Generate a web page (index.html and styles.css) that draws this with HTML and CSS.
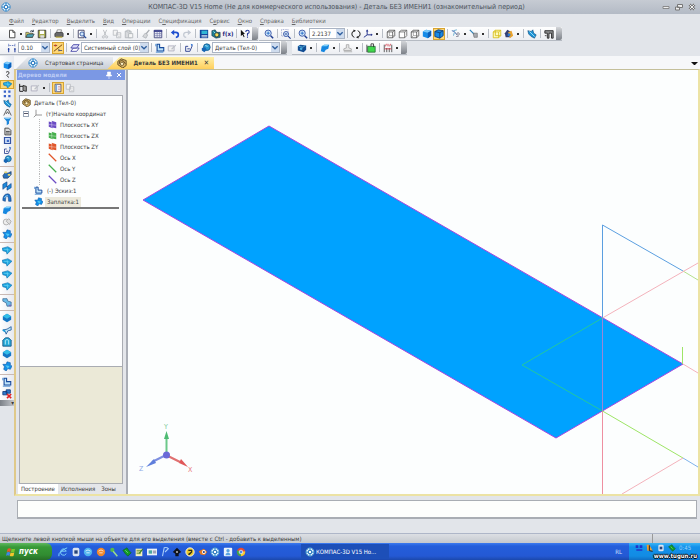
FILE: index.html
```html
<!DOCTYPE html>
<html lang="ru">
<head>
    <meta charset="UTF-8">
    <meta name="viewport" content="width=device-width, initial-scale=1.0">
    <title>КОМПАС-3D V15 Home</title>
    <link rel="stylesheet" href="styles.css">
</head>
<body>

    <svg class="sprite" aria-hidden="true">
        <symbol id="logo" viewBox="0 0 12 12"><circle cx="6" cy="6" r="5" fill="#e4f2fb" stroke="#2b7fc4"/><path d="M6 1v10M1 6h10" stroke="#3c92d4" stroke-width="1.5"/><circle cx="6" cy="6" r="2" fill="#fff" stroke="#1d6cb4"/><path d="M3 3l1.500 1.500M9 3L7.500 4.500M3 9l1.500-1.500M9 9L7.500 7.500" stroke="#2b7fc4"/></symbol>
        <symbol id="new" viewBox="0 0 12 12"><path d="M3 1.500h4l2.500 2.500v6.500H3z" fill="#fff" stroke="#333"/><path d="M7 1.500V4h2.500" fill="none" stroke="#333"/></symbol>
        <symbol id="open" viewBox="0 0 12 12"><path d="M1 10V4h3l1 1h4v5z" fill="#e5e06a" stroke="#444" stroke-width=".8"/><path d="M1 10l2-4h8l-2 4z" fill="#4da3b5" stroke="#333" stroke-width=".8"/><path d="M6 3q2-2 4 0M10 1v2H8" fill="none" stroke="#234"/></symbol>
        <symbol id="save" viewBox="0 0 12 12"><path d="M1.500 1.500h9v9h-9z" fill="#a9ae4c" stroke="#333"/><path d="M3.500 2h5v4h-5z" fill="#fff"/><path d="M4 7.500h4.500v3H4z" fill="#ddd"/></symbol>
        <symbol id="print" viewBox="0 0 12 12"><path d="M4 1h5L8 5H3z" fill="#fff" stroke="#555" stroke-width=".7"/><path d="M1 5.500L3 4h7l1 1.500V9H1z" fill="#68696a" stroke="#222" stroke-width=".7"/><path d="M2 9h8v1.500H2z" fill="#bba83a"/></symbol>
        <symbol id="preview" viewBox="0 0 12 12"><path d="M1.500 1.500h7v9h-7z" fill="#fff" stroke="#335"/><circle cx="6" cy="6" r="2.500" fill="#cfe6fa" stroke="#234a9a"/><path d="M8 8l3 3" stroke="#234a9a" stroke-width="1.500"/></symbol>
        <symbol id="cut" viewBox="0 0 12 12"><path d="M4 1l3 7M8 1L5 8" stroke="#b4b8bd" stroke-width="1"/><circle cx="4" cy="9.500" r="1.300" fill="none" stroke="#b4b8bd"/><circle cx="8" cy="9.500" r="1.300" fill="none" stroke="#b4b8bd"/></symbol>
        <symbol id="copy" viewBox="0 0 12 12"><path d="M1.500 1.500h5v6h-5zM5.500 4.500h5v6h-5z" fill="#f4f4f4" stroke="#b9bdc2"/><path d="M7 7h2.500M7 9h2.500" stroke="#c4c8cc" stroke-width=".7"/></symbol>
        <symbol id="paste" viewBox="0 0 12 12"><path d="M1.500 2.500h7v8h-7z" fill="#d8dadd" stroke="#b0b4b9"/><path d="M3.500 1.500h3v2h-3zM5.500 5.500h5v5h-5z" fill="#f6f6f6" stroke="#b0b4b9"/></symbol>
        <symbol id="brush" viewBox="0 0 12 12"><path d="M10 1L6 6" stroke="#a9adb2" stroke-width="1.500"/><path d="M5 5l3 2-2 4-4-2z" fill="#d5d7da" stroke="#b0b4b9"/></symbol>
        <symbol id="props" viewBox="0 0 12 12"><path d="M1.500 1.500h9v9h-9z" fill="#e8eaf6" stroke="#3a3f78"/><path d="M1 2.500h10" stroke="#373c8c" stroke-width="2"/><path d="M2 5.500h8M2 8h8M5 3v7M8 3v7" stroke="#6a6fa4" stroke-width=".7"/></symbol>
        <symbol id="undo" viewBox="0 0 12 12"><path d="M4 4h3q3 0 3 3t-3 3" fill="none" stroke="#1f4fd0" stroke-width="2"/><path d="M1 4.200L5 1v6.500z" fill="#1f4fd0"/></symbol>
        <symbol id="redo" viewBox="0 0 12 12"><path d="M8 4H5Q2 4 2 7t3 3" fill="none" stroke="#c3c9d3" stroke-width="1.500"/><path d="M11 4.200L7 1v6.500z" fill="#c3c9d3"/></symbol>
        <symbol id="book" viewBox="0 0 12 12"><path d="M1 1h10v10H1z" fill="#14439a"/><path d="M3 2h7v4H3z" fill="#31b6d4"/><path d="M3 8h7M3 9.500h7" stroke="#e8f2fa"/></symbol>
        <symbol id="gears" viewBox="0 0 12 12"><path d="M1 2l4-1 2 3h4v6l-5 1-5-3z" fill="#1e8295" stroke="#123" stroke-width=".6"/><circle cx="7" cy="7" r="2.500" fill="#f3e05a" stroke="#333"/><path d="M3 3l2 2" stroke="#aef"/></symbol>
        <symbol id="arrowhelp" viewBox="0 0 12 12"><path d="M1 1l5 5H4l1.500 3.500-1 .5L3 7 1 8.500z" fill="#111"/><path d="M7 3.500Q7 1.500 9 1.500t2 2q0 1.500-2 2V8M9 9v1.500" fill="none" stroke="#24389a" stroke-width="1.300"/></symbol>
        <symbol id="zoom" viewBox="0 0 12 12"><circle cx="5" cy="5" r="3.700" fill="#d5eafa" stroke="#2647a0"/><path d="M8 8l3 3" stroke="#1f3d90" stroke-width="1.800"/><path d="M3 5h4M5 3v4" stroke="#1b63c4"/></symbol>
        <symbol id="zoomarea" viewBox="0 0 12 12"><path d="M.5.5h8v8h-8z" fill="none" stroke="#8893c4" stroke-dasharray="1 1"/><circle cx="6" cy="6" r="3" fill="#d5eafa" stroke="#2647a0"/><path d="M4.500 6h3M8.500 8.500l3 3" stroke="#1f3d90" stroke-width="1.400"/></symbol>
        <symbol id="rotate" viewBox="0 0 12 12"><path d="M4 2Q1 3 1 6t3 4M8 2q3 1 3 4t-3 4" fill="none" stroke="#222" stroke-width="1.200"/><path d="M3 .5l3 1.500-3 2zM9 8l-3 2 3 1.500z" fill="#222"/></symbol>
        <symbol id="axes" viewBox="0 0 12 12"><path d="M5 1v6l-4 3M5 7h6" fill="none" stroke="#2c3a90" stroke-width="1.200"/><path d="M3.500 3L5 .5 6.500 3M9.500 5.500l2 1.500-2 1.500" fill="#2c3a90"/></symbol>
        <symbol id="cubewire" viewBox="0 0 12 12"><path d="M1.500 3.500L4 1.500h6.500V8L8 10.500H1.500zM1.500 3.500H8v7M8 3.500l2.500-2" fill="#fff" stroke="#444" stroke-width=".9"/><path d="M4 1.500V8h6.500M4 8l-2.500 2.500" fill="none" stroke="#777" stroke-width=".7"/></symbol>
        <symbol id="cubeline" viewBox="0 0 12 12"><path d="M1.500 3.500L4 1.500h6.500V8L8 10.500H1.500zM1.500 3.500H8v7M8 3.500l2.500-2" fill="#fff" stroke="#555" stroke-width=".9"/></symbol>
        <symbol id="cubeblue" viewBox="0 0 12 12"><path d="M1 3l4-2 6 1v6l-4 3-6-2z" fill="#168be8"/><path d="M1 3l4-2 6 1-4 2.500z" fill="#7fc9f8"/><path d="M7 4.500L11 2v6l-4 3z" fill="#0d5eb8"/></symbol>
        <symbol id="cubeedge" viewBox="0 0 12 12"><path d="M1 3l4-2 6 1v6l-4 3-6-2z" fill="#168be8" stroke="#123a70"/><path d="M1 3l6 1.500L11 2M7 4.500V11" fill="none" stroke="#123a70"/></symbol>
        <symbol id="points" viewBox="0 0 12 12"><path d="M1 2l3 1 3 4" fill="none" stroke="#2b58a8"/><path d="M3 2l4-1M4 4l-1 4" stroke="#51a0c8"/><circle cx="8.500" cy="6" r="1.500" fill="#fff" stroke="#778"/><path d="M6 9h3" stroke="#889"/></symbol>
        <symbol id="hammer" viewBox="0 0 12 12"><path d="M1 1l6 6" stroke="#2d83b8" stroke-width="1.500"/><path d="M5 5h5v5H6z" fill="#a7abb1" stroke="#555" stroke-width=".6"/></symbol>
        <symbol id="yellowbox" viewBox="0 0 12 12"><path d="M1.500 3.500L4 1.500h6.500V8L8 10.500H1.500zM1.500 3.500H8v7M8 3.500l2.500-2M4 1.500V8h6.500" fill="#fffbc0" stroke="#d5bd16"/></symbol>
        <symbol id="section" viewBox="0 0 12 12"><path d="M1 5l3-4 4 2v7H2z" fill="#333f74"/><path d="M5 4l4-2 2 6-4 3z" fill="#e9a32e"/><circle cx="6" cy="7" r="1.800" fill="#2d79d0"/></symbol>
        <symbol id="refresh" viewBox="0 0 12 12"><path d="M1 2l4 1 2-2 1 4 3 2-2 4-4-2-3-3z" fill="#1b93d6" stroke="#124a7a" stroke-width=".7"/><path d="M3 3l6 6" stroke="#b3e8fa"/></symbol>
        <symbol id="calc" viewBox="0 0 12 12"><path d="M1 2h10v9H9V5H6v6H4V5H1z" fill="#8c8d8e" stroke="#222"/><path d="M1 8h2" stroke="#333"/></symbol>
        <symbol id="step" viewBox="0 0 12 12"><path d="M2 1v4M9.500 1v4M2 3h8" stroke="#2c4ca8" stroke-dasharray="1 1"/><path d="M2 6v5M9.500 6v5M1 7.500h2M8.500 7.500h2" stroke="#2540a0" stroke-width="1.300"/></symbol>
        <symbol id="snap" viewBox="0 0 12 12"><path d="M1 10L11 2" stroke="#7a4a14" stroke-width="1.200"/><path d="M1 3h4M7 9h4M7 7v3" fill="none" stroke="#3d4c76"/><circle cx="3" cy="3" r="1.300" fill="#d03a1c"/></symbol>
        <symbol id="layers" viewBox="0 0 12 12"><path d="M1 10l3-4h7l-3 4z" fill="#fff" stroke="#3b3ba2"/><path d="M1 6l3-4h7L8 6z" fill="#dcdcf8" stroke="#3b3ba2"/></symbol>
        <symbol id="sketch" viewBox="0 0 12 12"><path d="M2.500 1.500h3v4h5v4h-8z" fill="#bfe3fa" stroke="#174a9c" stroke-width="1.300"/><path d="M1 1v3M1 11h9" stroke="#2f7cc9"/></symbol>
        <symbol id="edit" viewBox="0 0 12 12"><path d="M1.500 3.500h7v6h-7z" fill="#f1f1f1" stroke="#aab"/><path d="M5 7l5-5 1 1-5 5z" fill="#bcc0c6"/></symbol>
        <symbol id="measure" viewBox="0 0 12 12"><path d="M2 10V4h3M2 10h5l3-7M4 7h3" fill="none" stroke="#2b408f" stroke-width="1.100"/><path d="M8 1l3 1-2 2z" fill="#2b6fd0"/></symbol>
        <symbol id="part" viewBox="0 0 12 12"><circle cx="7" cy="5" r="4" fill="#2b9bd2" stroke="#14588c"/><path d="M1 6l4-1 2 3-3 3-3-2z" fill="#1765b4"/><path d="M5 3l3 1" stroke="#bdeafc"/></symbol>
        <symbol id="body" viewBox="0 0 12 12"><path d="M1 4l3-2 7 1v5l-3 3-7-2z" fill="#124d93"/><path d="M2 4l5 1 3-2" fill="none" stroke="#5ab6df"/><circle cx="5" cy="7" r="1.500" fill="#4bb0e0"/></symbol>
        <symbol id="surface" viewBox="0 0 12 12"><path d="M1 10l1-6 3-2h6l-1 5-3 1-2 3z" fill="#1687e0"/><path d="M2 4l3-2h6L8 4z" fill="#7cd0fa"/></symbol>
        <symbol id="stamp" viewBox="0 0 12 12"><path d="M4 6V2h3v4l3 1v2H1V7z" fill="#e5e5e5" stroke="#a8a8a8"/><path d="M1 10.500h10" stroke="#a8a8a8"/></symbol>
        <symbol id="green" viewBox="0 0 12 12"><path d="M2 4h9v7H2z" fill="#3fd84b" stroke="#2a6e3a"/><path d="M6 4V1h3v4" fill="none" stroke="#333"/><path d="M1 2v9" stroke="#444"/></symbol>
        <symbol id="dims" viewBox="0 0 12 12"><path d="M1.500 2v9M10.500 2v9M4.500 6v5M7.500 6v5" stroke="#444"/><path d="M2 7h8M4 1l-1 3M6 1v3M9 1L8 4" stroke="#cf2c3c"/></symbol>
        <symbol id="tree" viewBox="0 0 12 12"><path d="M2 1v9h4M2 4h4" fill="none" stroke="#222" stroke-width="1.200"/><path d="M6 3l4 1v6L6 9z" fill="#999" stroke="#222"/></symbol>
        <symbol id="pane" viewBox="0 0 12 12"><path d="M2.500 1.500h7v9h-7z" fill="#fff" stroke="#446"/><path d="M3 2h2v8H3z" fill="#7aa4d8"/><path d="M6 4h3M6 6h3M6 8h3" stroke="#c99"/></symbol>
        <symbol id="detail" viewBox="0 0 12 12"><path d="M1 4l4-3 6 2v6l-4 3-6-4z" fill="#d5b165" stroke="#54401a"/><path d="M3 7V4q3-2 5 0l2 3" fill="none" stroke="#54401a"/><circle cx="6" cy="7" r="2" fill="#fff2c4" stroke="#54401a" stroke-width=".8"/></symbol>
        <symbol id="origin" viewBox="0 0 12 12"><path d="M4 1v7h8M4 8l-3 3" fill="none" stroke="#777"/></symbol>
        <symbol id="plane" viewBox="0 0 12 12"><path d="M1 2l4 1V1l6 2v8L6 10v1L1 9z" fill="currentColor"/><path d="M5 1v9M1 6l10 1" stroke="#fff" stroke-opacity=".5"/></symbol>
        <symbol id="axis" viewBox="0 0 12 12"><path d="M1 1l10 10" stroke="currentColor" stroke-width="1.600"/></symbol>
        <symbol id="patch" viewBox="0 0 12 12"><path d="M1 4l4 0 1-3 4 1 0 3 2 1-2 4-3-1-2 3-3-2 1-3z" fill="#148fe6" stroke="#0c5aa8" stroke-width=".7"/><path d="M4 5l5 1-2 3z" fill="#4fc9f5"/></symbol>
        <symbol id="curve" viewBox="0 0 12 12"><path d="M4 3q3-2 4 0t-2 3 2 4" fill="none" stroke="#333" stroke-width="1.200"/></symbol>
        <symbol id="grid4" viewBox="0 0 12 12"><path d="M1 2h3v3H1zM7 2h3v3H7zM1 8h3v3H1zM7 8h3v3H7z" fill="#3a63c8"/></symbol>
        <symbol id="angle" viewBox="0 0 12 12"><path d="M1 10l4-8h2l4 8M4 8l2-3 2 3" fill="none" stroke="#333"/></symbol>
        <symbol id="funnel" viewBox="0 0 12 12"><path d="M1 1h10L8 6v3l-3 2V6z" fill="#1e86da"/><path d="M3 2h6" stroke="#a9e1fa"/></symbol>
        <symbol id="sheet" viewBox="0 0 12 12"><path d="M2.500 1.500h5l3 3v6h-8z" fill="#d8d8d8" stroke="#222"/><path d="M4 6h5M4 8h5" stroke="#333"/></symbol>
        <symbol id="frame" viewBox="0 0 12 12"><path d="M2 2h8v8H2z" fill="#cfe0fa" stroke="#3354a4" stroke-width="1.600"/><path d="M5 5h3v3H5z" fill="#3f6bc4"/></symbol>
        <symbol id="sweep" viewBox="0 0 12 12"><path d="M1 9q0-8 6-8 4 0 4 9H8q0-6-2-6T4 10z" fill="#1f74c9" stroke="#124082" stroke-width=".7"/><path d="M3 6q1-3 4-3" stroke="#9adcf8" fill="none"/></symbol>
        <symbol id="ribbon" viewBox="0 0 12 12"><path d="M1 4l5-3v6l5-4v5l-5 3V6L1 10z" fill="#1c8adb" stroke="#123f85" stroke-width=".7"/></symbol>
        <symbol id="people" viewBox="0 0 12 12"><path d="M1 8l3-4 3 1 4-2v4l-4 4H2z" fill="#2770bc" stroke="#1c2d48" stroke-width=".7"/><path d="M3 3h3v2H3zM7 6h3v2H7z" fill="#e3d36a"/></symbol>
        <symbol id="leaf" viewBox="0 0 12 12"><path d="M0 4l7-2 5 3-6 6-1-3-4-1z" fill="#18a0dc" stroke="#1068a8" stroke-width=".6"/><path d="M2 5l7 1M6 3l1 6" stroke="#7bdcf8" stroke-width=".7"/></symbol>
        <symbol id="ghost" viewBox="0 0 12 12"><circle cx="5" cy="6" r="3.500" fill="#eee" stroke="#aaa"/><path d="M5 5l3-3 3 3-2 4z" fill="#ddd" stroke="#aaa"/></symbol>
        <symbol id="hinge" viewBox="0 0 12 12"><path d="M1 2h5l1 3 4 1v5H6L5 7 1 5z" fill="#69bce8" stroke="#345d8c" stroke-width=".8"/><path d="M8 10h3" stroke="#8a4cb0"/></symbol>
        <symbol id="trim" viewBox="0 0 12 12"><path d="M1 6l5-1 5-3v4l-4 1-2 4-1-3z" fill="#bfe6f6" stroke="#1f5a9c"/><path d="M1 6l3 2" stroke="#1c9bd8" stroke-width="2"/></symbol>
        <symbol id="disc" viewBox="0 0 12 12"><path d="M1 4l5-3 5 3v4l-5 3-5-3z" fill="#1677c4"/><path d="M1 4l5-3 5 3-5 3z" fill="#33bde8"/></symbol>
        <symbol id="arch" viewBox="0 0 12 12"><path d="M1 11V4l3-3h4l3 3v7z" fill="#25a9d8" stroke="#14527f"/><path d="M4 9V4l2-1 2 1v5" fill="none" stroke="#cdf3fb"/></symbol>
        <symbol id="deny" viewBox="0 0 12 12"><path d="M1 3h5v4H1zM5 1h5v4H5z" fill="#2d7bd0" stroke="#113a7a"/><path d="M6 6l5 5M11 6l-5 5" stroke="#e12424" stroke-width="2"/></symbol>
        <symbol id="win" viewBox="0 0 12 12"><path d="M2 2q2-1 4 0L5 6Q3 5 1 6z" fill="#e8562a"/><path d="M6.500 2q2 1 4.500 0l-1 4q-2 1-4 0z" fill="#7bc62c"/><path d="M1 6.500q2-1 4 0l-1 4q-2-1-4 0z" fill="#3f86e8"/><path d="M5.500 6.700q2 1 4.500 0l-1 4q-2 1-4.500 0z" fill="#f4c52c"/></symbol>
        <symbol id="ie" viewBox="0 0 12 12"><path d="M10 8q-2 3-5 1.500T4 4t6 1H3M1 11q-1-3 3-6t7-4" fill="none" stroke="#7ed0f8" stroke-width="1.200"/></symbol>
        <symbol id="app" viewBox="0 0 12 12"><rect x="2" y="1" width="8" height="10" rx="2" fill="#d9e3f1"/><path d="M4 4h4v4H4z" fill="#27447a"/></symbol>
        <symbol id="ball" viewBox="0 0 12 12"><circle cx="6" cy="6" r="5" fill="currentColor"/><path d="M3 5q3-3 6 0M4 7h4" fill="none" stroke="#fff" stroke-opacity=".75" stroke-width="1.200"/></symbol>
        <symbol id="skull" viewBox="0 0 12 12"><circle cx="6" cy="6" r="5" fill="#e8c72a" stroke="#fff"/><path d="M4 4h4v2L5 9M4 9l4-3" fill="none" stroke="#2a2a1a" stroke-width="1.300"/></symbol>
        <symbol id="blender" viewBox="0 0 12 12"><path d="M1 5l6-3 4 4-3 4-5-1z" fill="#e57a22"/><circle cx="7" cy="6" r="2.300" fill="#fff"/><circle cx="7" cy="6" r="1.300" fill="#23408c"/></symbol>
        <symbol id="people2" viewBox="0 0 12 12"><rect x="1" y="1" width="10" height="10" rx="1" fill="#eaf3fc"/><circle cx="6" cy="4.500" r="2" fill="#58a2e2"/><path d="M3 10q0-3 3-3t3 3z" fill="#58a2e2"/></symbol>
        <symbol id="key" viewBox="0 0 12 12"><circle cx="4" cy="3.500" r="2.500" fill="#55b84c"/><path d="M5 5l5 6" stroke="#9bdc8a" stroke-width="1.800"/></symbol>
        <symbol id="cards" viewBox="0 0 12 12"><path d="M1 4l5-3 2 3 3 3-4 4-3-3z" fill="#149a28" stroke="#0a5a1a" stroke-width=".7"/><path d="M4 4l3 3" stroke="#76e07a"/></symbol>
        <symbol id="note" viewBox="0 0 12 12"><path d="M2 2h8v9H2z" fill="#f4f2bd"/><path d="M3 4h6M3 6h4M3 8h5" stroke="#5d8a2a"/><path d="M6 7l4-5 1 1-4 5z" fill="#2f7a22"/></symbol>
        <symbol id="mail" viewBox="0 0 12 12"><path d="M0 2h12v8H0z" fill="#e9f1f7"/><path d="M2 4h4v4H2z" fill="#4aa8a0"/><path d="M7 5h4M7 7h4" stroke="#668"/></symbol>
        <symbol id="flag" viewBox="0 0 12 12"><path d="M3 11L5 1q3-1 5 1L6 6" fill="none" stroke="#a9cef9" stroke-width="1.300"/></symbol>
        <symbol id="spade" viewBox="0 0 12 12"><path d="M6 1l5 5-3 2v3H4V8L1 6z" fill="#10131c"/><path d="M5 5h2v2H5z" fill="#ddd"/></symbol>
        <symbol id="chrome" viewBox="0 0 12 12"><circle cx="6" cy="6" r="5" fill="#e34a35"/><path d="M6 6L1.500 4A5 5 0 0 0 6 11z" fill="#3ba54c"/><path d="M6 6l5-1a5 5 0 0 1-5 6z" fill="#f4cb34"/><circle cx="6" cy="6" r="2.200" fill="#4d8bf0" stroke="#fff" stroke-width=".8"/></symbol>
        <symbol id="net" viewBox="0 0 12 12"><path d="M1 2h4v4H1zM7 2h4v4H7zM2 8h9v2H2z" fill="#2233c8"/></symbol>
        <symbol id="tiger" viewBox="0 0 12 12"><path d="M1 1h4l5 9H2z" fill="#eb9e35"/><path d="M5 2v8l5 1" fill="none" stroke="#222" stroke-width="1.500"/></symbol>
        <symbol id="arrow" viewBox="0 0 6 6"><path d="M1 2l2 2 2-2" fill="none" stroke="#2f5f9f"/></symbol>
    </svg>

    <header class="titlebar">
        <svg class="icon"><use href="#logo"/></svg>
        <h1>КОМПАС-3D V15 Home (Не для коммерческого использования) - Деталь БЕЗ ИМЕНИ1 (ознакомительный период)</h1>
        <div class="window-buttons">
            <button aria-label="Свернуть"><svg viewBox="0 0 8 8"><path d="M1 3.500h6v2H1z" fill="#eee" stroke="#777" stroke-width=".8"/></svg></button>
            <button aria-label="Восстановить"><svg viewBox="0 0 8 8"><path d="M2.500 1.500h5v3h-5zM.5 4h4v3h-4z" fill="#eee" stroke="#777"/></svg></button>
            <button aria-label="Закрыть"><svg viewBox="0 0 8 8"><path d="M1.500 1.500l5 5M6.500 1.500l-5 5" stroke="#777" stroke-width="2.500"/><path d="M1.500 1.500l5 5M6.500 1.500l-5 5" stroke="#eee"/></svg></button>
        </div>
    </header>

    <nav class="menu">
        <a href="#"><u>Ф</u>айл</a>
        <a href="#"><u>Р</u>едактор</a>
        <a href="#"><u>В</u>ыделить</a>
        <a href="#"><u>В</u>ид</a>
        <a href="#"><u>О</u>перации</a>
        <a href="#">С<u>п</u>ецификация</a>
        <a href="#">С<u>е</u>рвис</a>
        <a href="#"><u>О</u>кно</a>
        <a href="#"><u>С</u>правка</a>
        <a href="#"><u>Б</u>иблиотеки</a>
    </nav>

    <div class="toolbars">
        <div class="toolbar-row">
            <div class="toolbar">
                <button class="tool" aria-label="Создать"><svg><use href="#new"/></svg></button><button class="drop" aria-label="Ещё"></button>
                <button class="tool" aria-label="Открыть"><svg><use href="#open"/></svg></button>
                <button class="tool" aria-label="Сохранить"><svg><use href="#save"/></svg></button><i class="sep"></i>
                <button class="tool" aria-label="Печать"><svg><use href="#print"/></svg></button><button class="drop" aria-label="Ещё"></button><i class="sep"></i>
                <button class="tool" aria-label="Просмотр"><svg><use href="#preview"/></svg></button><button class="drop" aria-label="Ещё"></button><i class="sep"></i>
                <button class="tool" aria-label="Вырезать"><svg><use href="#cut"/></svg></button>
                <button class="tool" aria-label="Копировать"><svg><use href="#copy"/></svg></button>
                <button class="tool" aria-label="Вставить"><svg><use href="#paste"/></svg></button><i class="sep"></i>
                <button class="tool" aria-label="Копировать свойства"><svg><use href="#brush"/></svg></button>
                <button class="tool" aria-label="Свойства"><svg><use href="#props"/></svg></button><i class="sep"></i>
                <button class="tool" aria-label="Отменить"><svg><use href="#undo"/></svg></button>
                <button class="tool" aria-label="Повторить"><svg><use href="#redo"/></svg></button><i class="sep"></i>
                <button class="tool" aria-label="Менеджер библиотек"><svg><use href="#book"/></svg></button>
                <button class="tool" aria-label="Менеджер шаблонов"><svg><use href="#gears"/></svg></button>
                <button class="tool fx">f(x)</button><i class="sep"></i>
                <button class="tool" aria-label="Справка"><svg><use href="#arrowhelp"/></svg></button>
                <i class="grip"></i>
            </div>
            <div class="toolbar">
                <button class="tool" aria-label="Увеличить"><svg><use href="#zoom"/></svg></button><i class="sep"></i>
                <button class="tool" aria-label="Рамкой"><svg><use href="#zoomarea"/></svg></button><i class="sep"></i>
                <button class="tool" aria-label="Масштаб"><svg><use href="#zoom"/></svg></button>
                <span class="combo combo-zoom"><select aria-label="Масштаб"><option>2.2137</option></select><svg><use href="#arrow"/></svg></span><i class="sep"></i>
                <button class="tool" aria-label="Повернуть"><svg><use href="#rotate"/></svg></button>
                <button class="tool" aria-label="Ориентация"><svg><use href="#axes"/></svg></button><button class="drop" aria-label="Ещё"></button><i class="sep"></i>
                <button class="tool" aria-label="Каркас"><svg><use href="#cubewire"/></svg></button>
                <button class="tool" aria-label="Без невидимых линий"><svg><use href="#cubeline"/></svg></button>
                <button class="tool" aria-label="Тонкие линии"><svg><use href="#cubewire"/></svg></button>
                <button class="tool" aria-label="Полутоновое"><svg><use href="#cubeblue"/></svg></button>
                <button class="tool active" aria-label="Полутоновое с каркасом"><svg><use href="#cubeedge"/></svg></button><i class="sep"></i>
                <button class="tool" aria-label="Скрыть"><svg><use href="#points"/></svg></button><button class="drop" aria-label="Ещё"></button>
                <button class="tool" aria-label="Инструмент"><svg><use href="#hammer"/></svg></button><button class="drop" aria-label="Ещё"></button><i class="sep"></i>
                <button class="tool" aria-label="Габарит"><svg><use href="#yellowbox"/></svg></button>
                <button class="tool" aria-label="Сечение"><svg><use href="#section"/></svg></button><button class="drop" aria-label="Ещё"></button><i class="sep"></i>
                <button class="tool" aria-label="Перестроить"><svg><use href="#refresh"/></svg></button><i class="sep"></i>
                <button class="tool" aria-label="Размеры"><svg><use href="#calc"/></svg></button>
                <i class="grip"></i>
            </div>
        </div>
        <div class="toolbar-row second">
            <div class="toolbar">
                <button class="tool" aria-label="Шаг"><svg><use href="#step"/></svg></button>
                <span class="combo combo-step"><select aria-label="Шаг курсора"><option>0.10</option></select><svg><use href="#arrow"/></svg></span>
                <button class="tool active" aria-label="Привязки"><svg><use href="#snap"/></svg></button><i class="sep"></i>
                <button class="tool" aria-label="Слои"><svg><use href="#layers"/></svg></button>
                <span class="combo combo-layer"><select aria-label="Слой"><option>Системный слой (0)</option></select><svg><use href="#arrow"/></svg></span><i class="sep"></i>
                <button class="tool" aria-label="Эскиз"><svg><use href="#sketch"/></svg></button>
                <button class="tool" aria-label="Правка"><svg><use href="#edit"/></svg></button><i class="sep"></i>
                <button class="tool" aria-label="Измерить"><svg><use href="#measure"/></svg></button><i class="sep"></i>
                <button class="tool" aria-label="Деталь"><svg><use href="#part"/></svg></button>
                <span class="combo combo-part"><select aria-label="Тело"><option>Деталь (Тел-0)</option></select><svg><use href="#arrow"/></svg></span>
                <i class="grip"></i>
            </div>
            <div class="toolbar">
                <button class="tool" aria-label="Тело"><svg><use href="#body"/></svg></button><button class="drop" aria-label="Ещё"></button><i class="sep"></i>
                <button class="tool" aria-label="Поверхность"><svg><use href="#surface"/></svg></button><button class="drop" aria-label="Ещё"></button><i class="sep"></i>
                <button class="tool" aria-label="Штамп"><svg><use href="#stamp"/></svg></button><button class="drop" aria-label="Ещё"></button><i class="sep"></i>
                <button class="tool" aria-label="Проекция"><svg><use href="#green"/></svg></button><i class="sep"></i>
                <button class="tool" aria-label="Размер"><svg><use href="#dims"/></svg></button><button class="drop" aria-label="Ещё"></button>
                <i class="grip"></i>
            </div>
        </div>
    </div>

    <main class="workspace">
        <aside class="side-tools">
            <div class="side-group spread">
                <button aria-label="Деталь"><svg><use href="#cubeblue"/></svg></button>
                <button aria-label="Кривая"><svg><use href="#curve"/></svg></button>
                <button class="active" aria-label="Поверхности"><svg><use href="#leaf"/></svg></button>
                <button aria-label="Массивы"><svg><use href="#grid4"/></svg></button>
                <button aria-label="Вспомогательная геометрия"><svg><use href="#refresh"/></svg></button>
                <button aria-label="Измерения"><svg><use href="#angle"/></svg></button>
                <button aria-label="Фильтры"><svg><use href="#funnel"/></svg></button>
                <button aria-label="Спецификация"><svg><use href="#sheet"/></svg></button>
                <button aria-label="Отчёты"><svg><use href="#frame"/></svg></button>
                <button aria-label="Оформление"><svg><use href="#measure"/></svg></button>
                <button aria-label="Листовое тело"><svg><use href="#part"/></svg></button>
            </div>
            <div class="side-group">
                <button aria-label="Импорт"><svg><use href="#people"/></svg></button>
                <button aria-label="Выдавливание"><svg><use href="#ribbon"/></svg></button>
                <button aria-label="Вращение"><svg><use href="#sweep"/></svg></button>
                <button aria-label="Кинематическая"><svg><use href="#surface"/></svg></button>
                <button aria-label="По сечениям"><svg><use href="#ghost"/></svg></button>
                <button aria-label="Заплатка"><svg><use href="#patch"/></svg></button>
            </div>
            <div class="side-group">
                <button aria-label="Линейчатая"><svg><use href="#leaf"/></svg></button>
                <button aria-label="По сети точек"><svg><use href="#leaf"/></svg></button>
                <button aria-label="По сети кривых"><svg><use href="#leaf"/></svg></button>
                <button aria-label="По пласту точек"><svg><use href="#leaf"/></svg></button>
            </div>
            <div class="side-group">
                <button aria-label="Эквидистанта"><svg><use href="#hinge"/></svg></button>
            </div>
            <div class="side-group">
                <button aria-label="Сшивка"><svg><use href="#disc"/></svg></button>
                <button aria-label="Усечение"><svg><use href="#trim"/></svg></button>
                <button aria-label="Продление"><svg><use href="#arch"/></svg></button>
                <button aria-label="Скругление"><svg><use href="#disc"/></svg></button>
                <button aria-label="Придать толщину"><svg><use href="#patch"/></svg></button>
            </div>
            <div class="side-group">
                <button aria-label="Восстановить"><svg><use href="#sketch"/></svg></button>
                <button aria-label="Удалить грани"><svg><use href="#deny"/></svg></button>
            </div>
            <i class="side-grip">▾</i>
        </aside>

        <section class="document">
            <div class="doc-tabs">
                <a class="doc-tab" href="#"><svg class="icon"><use href="#logo"/></svg>Стартовая страница</a>
                <a class="doc-tab current" href="#"><svg class="icon"><use href="#detail"/></svg>Деталь БЕЗ ИМЕНИ1 <b class="tab-close">✕</b></a>
                <button class="tab-list" aria-label="Список окон"></button>
            </div>

            <div class="doc-body">
                <div class="model-panel">
                    <div class="panel-header">
                        <h2>Дерево модели</h2>
                        <button aria-label="Закрепить"><svg viewBox="0 0 8 8"><path d="M2.500 1h3v3h1v1h-5V4h1zM4 5v3" fill="#fff" stroke="#fff" stroke-width=".6"/></svg></button>
                        <button aria-label="Закрыть панель"><svg viewBox="0 0 8 8"><path d="M2 2l4 4M6 2L2 6" stroke="#fff"/></svg></button>
                    </div>
                    <div class="panel-tools">
                        <button class="tool" aria-label="Дерево"><svg><use href="#tree"/></svg></button>
                        <button class="tool" aria-label="Состав"><svg><use href="#edit"/></svg></button><button class="drop" aria-label="Ещё"></button><i class="sep"></i>
                        <button class="tool active" aria-label="Отношения"><svg><use href="#pane"/></svg></button>
                        <button class="tool" aria-label="Дополнительно"><svg><use href="#copy"/></svg></button>
                    </div>
                    <ul class="tree">
                        <li class="root"><svg class="icon"><use href="#detail"/></svg>Деталь (Тел-0)</li>
                        <li class="level1"><span class="toggle"></span><svg class="icon"><use href="#origin"/></svg>(т)Начало координат</li>
                        <li class="level2 violet"><svg class="icon"><use href="#plane"/></svg>Плоскость XY</li>
                        <li class="level2 green"><svg class="icon"><use href="#plane"/></svg>Плоскость ZX</li>
                        <li class="level2 red"><svg class="icon"><use href="#plane"/></svg>Плоскость ZY</li>
                        <li class="level2 red"><svg class="icon"><use href="#axis"/></svg>Ось X</li>
                        <li class="level2 green"><svg class="icon"><use href="#axis"/></svg>Ось Y</li>
                        <li class="level2 violet"><svg class="icon"><use href="#axis"/></svg>Ось Z</li>
                        <li class="level1 leaf"><svg class="icon"><use href="#sketch"/></svg>(-) Эскиз:1</li>
                        <li class="level1 leaf"><svg class="icon"><use href="#patch"/></svg><span class="selected">Заплатка:1</span></li>
                        <li class="tree-end"></li>
                    </ul>
                    <div class="panel-blank"></div>
                    <div class="panel-tabs">
                        <button class="on">Построение</button>
                        <button>Исполнения</button>
                        <button>Зоны</button>
                    </div>
                </div>

                <svg class="canvas" viewBox="128 70 570 424" preserveAspectRatio="xMinYMin slice">
                    <path d="M269 126L683 364L556 438L143 200z" fill="#00a2ff" stroke="#a445e0"/>
                    <g fill="none">
                        <path d="M602.500 318V225L683 271" stroke="#5b9fe0"/>
                        <path d="M683 271l15 9" stroke="#b5e08c"/>
                        <path d="M602.500 318L698 263M683 364l15 9" stroke="#f3b2bb"/>
                        <path d="M602.500 411v83" stroke="#ee8fa0"/>
                        <path d="M602.500 318v93" stroke="#9a86d8"/>
                        <path d="M602.500 318L522 365l80.500 46" stroke="#22c8a0"/>
                        <path d="M602.500 411L683 458M682.500 364v-17" stroke="#9ee566"/>
                        <path d="M683 458l15 9" stroke="#7fb2ea"/>
                        <path d="M683 458l-61 36" stroke="#f3b2bb"/>
                    </g>
                    <g class="triad">
                        <path d="M166.500 455v-16" stroke="#6cc98a" stroke-width="2"/>
                        <path d="M164 439l2.500-8 2.500 8z" fill="#4dbb72"/>
                        <path d="M166 455l-14 7" stroke="#7d8fe0" stroke-width="2"/>
                        <path d="M154 459l2 4-10 4z" fill="#5f7fdc"/>
                        <path d="M166 455l14 7" stroke="#e07070" stroke-width="2"/>
                        <path d="M181 459l-2 4 9 4z" fill="#e05858"/>
                        <circle cx="166.500" cy="455" r="3.500" fill="#6a6ad8"/>
                        <text x="164" y="429" fill="#7ccb98">Y</text>
                        <text x="139" y="471" fill="#8fabe6">Z</text>
                        <text x="188" y="472" fill="#e87878">X</text>
                    </g>
                </svg>
            </div>
        </section>
    </main>

    <div class="message-area"><div class="message-box"></div></div>

    <div class="statusbar">
        <p>Щелкните левой кнопкой мыши на объекте для его выделения (вместе с Ctrl - добавить к выделенным)</p>
        <span></span>
    </div>

    <footer class="taskbar">
        <button class="start"><svg class="icon"><use href="#win"/></svg>пуск</button>
        <div class="quick">
            <svg><use href="#ie"/></svg>
            <svg><use href="#app"/></svg>
            <svg class="sky"><use href="#ball"/></svg>
            <svg class="orange"><use href="#ball"/></svg>
            <svg><use href="#key"/></svg>
            <svg><use href="#cards"/></svg>
            <svg><use href="#note"/></svg>
            <svg><use href="#mail"/></svg>
            <svg><use href="#flag"/></svg>
            <svg><use href="#spade"/></svg>
            <svg><use href="#skull"/></svg>
            <svg><use href="#blender"/></svg>
            <svg><use href="#logo"/></svg>
            <svg><use href="#people2"/></svg>
            <svg><use href="#chrome"/></svg>
        </div>
        <button class="task"><svg class="icon"><use href="#logo"/></svg>КОМПАС-3D V15 Ho...</button>
        <span class="lang">RL</span>
        <div class="tray">
            <div class="tray-icons">
                <svg><use href="#net"/></svg>
                <svg><use href="#tiger"/></svg>
                <svg><use href="#app"/></svg>
                <svg><use href="#cards"/></svg>
                <span>0:45</span>
            </div>
            <b class="watermark">www.tugun.ru</b>
        </div>
    </footer>

</body>
</html>
```

FILE: styles.css
```css
* {
    box-sizing: border-box;
}

body {
    margin: 0;
    height: 100vh;
    display: flex;
    flex-direction: column;
    overflow: hidden;
    background-color: #e2e5ea;
    color: #3a3a3a;
    font-family: "DejaVu Sans Condensed", "DejaVu Sans", sans-serif;
    font-size: 6px;
    line-height: 10px;
}

button,
select {
    margin: 0;
    padding: 0;
    border: none;
    background: none;
    color: inherit;
    font: inherit;
}

a {
    color: inherit;
    text-decoration: none;
}

svg {
    display: block;
    flex: none;
}

.sprite {
    display: none;
}

.icon {
    width: 10px;
    height: 10px;
}

/* title and menu */

.titlebar {
    display: flex;
    align-items: center;
    height: 14px;
    padding: 0 4px 0 1px;
    background: linear-gradient(#c6cbd3, #b3bac5);
}

.titlebar h1 {
    flex: 1;
    margin: 0;
    text-align: center;
    font-size: 7px;
    font-weight: normal;
    color: #4a515a;
}

.window-buttons {
    display: flex;
    gap: 5px;
}

.window-buttons svg {
    width: 8px;
    height: 8px;
}

.menu {
    display: flex;
    gap: 8px;
    height: 13px;
    padding: 2px 9px;
    color: #666;
}

/* toolbars */

.toolbar-row {
    display: flex;
    gap: 1px;
    height: 14px;
}

.toolbar-row.second {
    gap: 5px;
}

.toolbar {
    display: flex;
    align-items: center;
    height: 14px;
    padding-left: 4px;
    background: linear-gradient(#fff, #eceef2);
    border-bottom: 1px solid #b5bac2;
}

.toolbar:first-child {
    padding-left: 6px;
}

.tool {
    flex: none;
    display: flex;
    align-items: center;
    justify-content: center;
    width: 12px;
    height: 12px;
}

.tool svg {
    width: 10px;
    height: 10px;
}

.active {
    background-color: #ffd877;
    outline: 1px solid #d9a52f;
    outline-offset: -1px;
}

.fx {
    color: #26267c;
    font-weight: bold;
}

.drop {
    flex: none;
    width: 6px;
    height: 12px;
}

.drop::before {
    content: "";
    display: block;
    width: 2px;
    height: 2px;
    margin: 0 auto;
    background-color: #333;
}

.sep {
    flex: none;
    width: 1px;
    height: 9px;
    margin: 0 2px;
    background-color: #b9bec6;
}

.grip {
    width: 6px;
    height: 13px;
    margin-left: 1px;
    background: linear-gradient(#d3d5d9, #7c8188);
    border-radius: 0 2px 2px 0;
}

.combo {
    position: relative;
    height: 11px;
    background-color: #fff;
    border: 1px solid #aab4c4;
}

.combo select {
    display: block;
    width: 100%;
    height: 9px;
    padding-left: 2px;
    appearance: none;
    line-height: 9px;
}

.combo svg {
    position: absolute;
    right: 0;
    top: 0;
    width: 8px;
    height: 9px;
    background-color: #cfdcee;
    pointer-events: none;
}

.combo-zoom {
    width: 36px;
}

.combo-step {
    width: 32px;
    margin-right: 2px;
}

.combo-layer {
    width: 68px;
}

.combo-part {
    width: 68px;
}

/* workspace */

.workspace {
    flex: 1;
    display: flex;
    min-height: 0;
    padding-top: 1px;
}

.side-tools {
    flex: none;
    align-self: flex-start;
    width: 14px;
    padding-top: 5px;
    background: linear-gradient(90deg, #fff, #e6e9f0);
}

.side-group + .side-group {
    margin-top: 2px;
    padding-top: 1px;
    border-top: 1px solid #c9b9b4;
}

.side-group button {
    display: flex;
    align-items: center;
    justify-content: center;
    width: 14px;
    height: 12px;
}

.side-group svg {
    width: 10px;
    height: 10px;
}

.side-group.spread {
    display: flex;
    flex-direction: column;
    justify-content: space-between;
    height: 103px;
}

.side-group.spread button {
    height: 9px;
}

.side-group.spread svg {
    width: 9px;
    height: 9px;
}

.side-grip {
    display: block;
    height: 6px;
    line-height: 6px;
    text-align: right;
    font-style: normal;
    background: linear-gradient(90deg, #7c8188, #c3c6cb);
}

.document {
    flex: 1;
    display: flex;
    flex-direction: column;
    min-width: 0;
}

.doc-tabs {
    display: flex;
    height: 13px;
    padding: 1px 2px 0 2px;
    background-color: #f6f7f9;
}

.doc-tab {
    display: flex;
    align-items: center;
    gap: 7px;
    height: 12px;
    padding: 0 10px 0 12px;
    background: linear-gradient(#e9ecf1, #c9ced7);
    clip-path: polygon(12px 0, 100% 0, 100% 100%, 0 100%);
}

.doc-tab.current {
    gap: 6px;
    margin-left: -6px;
    padding: 0 5px 0 10px;
    background: linear-gradient(#fff0a8, #ffcf5c);
    font-weight: bold;
}

.tab-close {
    font-size: 7px;
}

.tab-list {
    width: 7px;
    margin-left: auto;
}

.tab-list::before {
    content: "";
    display: block;
    border: 3px solid transparent;
    border-top-color: #111;
    border-bottom: none;
}

.doc-body {
    flex: 1;
    display: flex;
    min-height: 0;
    border: 2px solid #ece3a4;
    border-top: 1px solid #c4bf9a;
    border-left-color: #dfc98a;
}

.model-panel {
    flex: none;
    display: flex;
    flex-direction: column;
    width: 112px;
    padding-left: 1px;
    background-color: #e4e6ea;
    border-right: 2px solid #aaaeb6;
}

.panel-header {
    display: flex;
    align-items: center;
    height: 10px;
    margin-right: 1px;
    padding: 0 2px 0 1px;
    background-color: #7b98e4;
    color: #bccbf5;
}

.panel-header h2 {
    flex: 1;
    margin: 0;
    font-size: 6px;
}

.panel-header svg {
    width: 8px;
    height: 8px;
    margin-left: 2px;
}

.panel-tools {
    display: flex;
    align-items: center;
    height: 15px;
}

.tree {
    flex: none;
    height: 272px;
    margin: 0 3px 0 2px;
    padding: 1px 0 0 2px;
    list-style: none;
    background-color: #fdfefe;
    border: 1px solid #a9acb2;
}

.tree li {
    display: flex;
    align-items: center;
    gap: 3px;
    height: 11px;
    white-space: nowrap;
}

.tree .icon {
    width: 9px;
    height: 9px;
}

.tree .level1 {
    gap: 4px;
}

.tree .leaf {
    padding-left: 12px;
}

.tree .level2 {
    margin-left: 17px;
    border-left: 1px dotted #bbb;
    padding-left: 8px;
}

.violet .icon {
    color: #6b4cc4;
}

.green .icon {
    color: #45b04c;
}

.red .icon {
    color: #e0562a;
}

.toggle {
    width: 6px;
    height: 6px;
    margin-left: 1px;
    border: 1px solid #9aa7b8;
    background: linear-gradient(#fff 1px, #556 1px, #556 2px, #fff 2px);
}

.selected {
    padding: 0 2px;
    margin-left: -2px;
    background-color: #ece9dc;
}

.tree .tree-end {
    height: 2px;
    margin-right: 3px;
    background-color: #777;
}

.panel-blank {
    flex: 1;
    margin: 0 3px 0 2px;
    background-color: #ebe9d7;
    border: 1px solid #a9acb2;
    border-top: none;
}

.panel-tabs {
    display: flex;
    height: 10px;
    margin-left: 1px;
}

.panel-tabs button {
    padding: 0 3px;
}

.panel-tabs .on {
    background-color: #fff;
}

.canvas {
    flex: 1;
    min-width: 0;
    height: 100%;
    background-color: #fcfefe;
}

.triad text {
    font-size: 7px;
}

/* message line and status */

.message-area {
    flex: none;
    height: 37px;
    padding: 4px 3px 14px 17px;
}

.message-box {
    height: 19px;
    background-color: #fdfefc;
    border: 1px solid #a9adb3;
    border-bottom-width: 2px;
}

.statusbar {
    flex: none;
    display: flex;
    height: 10px;
    padding-left: 2px;
    border-top: 1px solid #aeb6c8;
    background: linear-gradient(#dcdfe4, #c4c8ce);
}

.statusbar p {
    flex: 1;
    margin: 0;
}

.statusbar span {
    width: 48px;
    border-left: 1px solid #999;
}

/* taskbar */

.taskbar {
    flex: none;
    display: flex;
    align-items: center;
    height: 17px;
    background: linear-gradient(#3c7bf0, #245edb 3px, #2459d4 13px, #1b48ac);
    color: #fff;
}

.start {
    display: flex;
    align-items: center;
    gap: 3px;
    width: 52px;
    height: 17px;
    padding-left: 6px;
    border-radius: 0 6px 6px 0;
    background: linear-gradient(#5fb85f, #379a37 4px, #318c31 12px, #266e26);
    font-size: 8px;
    font-style: italic;
    font-weight: bold;
}

.quick {
    display: flex;
    justify-content: space-between;
    width: 188px;
    margin-left: 6px;
}

.quick svg {
    width: 10px;
    height: 10px;
}

.sky {
    color: #4fb4ee;
}

.orange {
    color: #f0872a;
}

.task {
    display: flex;
    align-items: center;
    gap: 1px;
    width: 88px;
    height: 15px;
    margin-left: 55px;
    padding-left: 4px;
    background-color: #1d4fb8;
}

.lang {
    margin: 0 7px 0 auto;
    color: #cfe0ff;
}

.tray {
    display: flex;
    flex-direction: column;
    width: 71px;
    height: 17px;
    padding: 1px 3px 0 6px;
    background: linear-gradient(#3ab4f5, #1290ea 4px, #128ce4 13px, #0f6fc4);
}

.tray-icons {
    display: flex;
    gap: 3px;
    height: 8px;
    line-height: 8px;
    color: #9bd0f8;
}

.tray-icons svg {
    width: 8px;
    height: 8px;
}

.watermark {
    align-self: flex-end;
    line-height: 7px;
    text-shadow: 1px 0 #000, -1px 0 #000, 0 1px #000, 0 -1px #000;
}
```
